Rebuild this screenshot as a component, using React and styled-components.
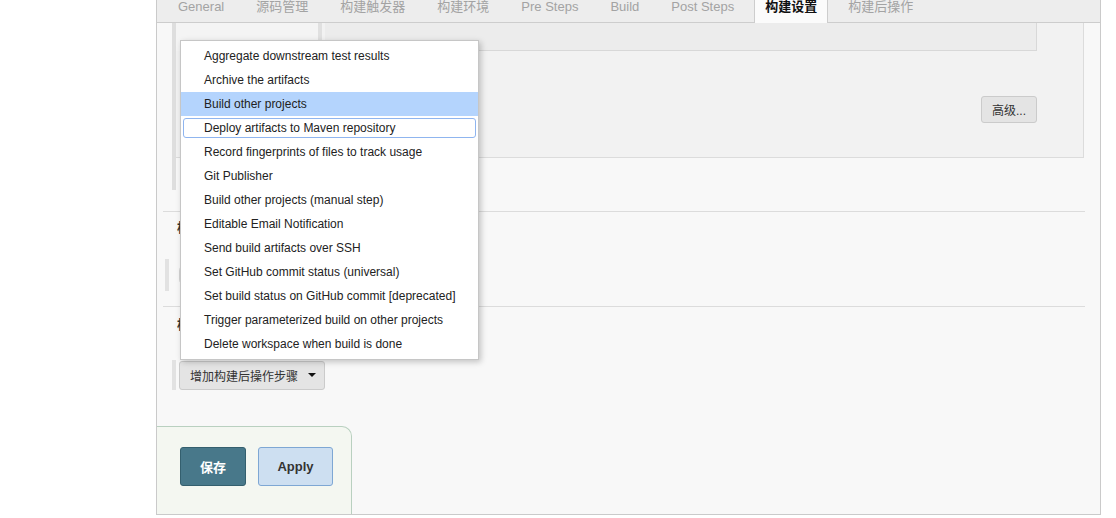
import React from "react";
import styled, { createGlobalStyle } from "styled-components";

const Global = createGlobalStyle`
  html, body { margin: 0; padding: 0; background: #fff; }
  body {
    font-family: "Liberation Sans", Arial, "Noto Sans CJK SC", sans-serif;
    font-size: 13px;
    color: #333;
    overflow: hidden;
  }
`;

const Page = styled.div`
  margin-top: -10px;
  padding-left: 156px;
  width: 1116px;
  box-sizing: border-box;
`;

const Panel = styled.div`
  position: relative;
  width: 945px;
  box-sizing: border-box;
  background: #f8f8f8;
  border: 1px solid #cacaca;
  border-top: none;
`;

const TabBar = styled.div`
  display: flex;
  align-items: stretch;
  gap: 8px;
  height: 33px;
  box-sizing: border-box;
  padding-left: 9px;
  background: #ededed;
  border-bottom: 1px solid #cdcdcd;
`;

const Tab = styled.div`
  padding: 0 ${(p) => (p.$active ? 10 : 11)}px;
  line-height: 31px;
  font-size: 13px;
  white-space: nowrap;
  color: ${(p) => (p.$active ? "#111" : "#a3a3a3")};
  font-weight: ${(p) => (p.$active ? "bold" : "normal")};
  background: ${(p) => (p.$active ? "#fbfbfb" : "transparent")};
  border: 1px solid ${(p) => (p.$active ? "#cdcdcd" : "transparent")};
  border-bottom: none;
  margin-bottom: ${(p) => (p.$active ? "-1px" : "0")};
`;

const Body = styled.div`
  display: flex;
  flex-direction: column;
`;

const Chunk = styled.div`
  margin-left: 15px;
  margin-right: 16px;
  border-left: 4px solid #dedede;
  padding-bottom: 32px;
`;

const ConfigBox = styled.div`
  display: flex;
  flex-direction: column;
  height: 135px;
  box-sizing: border-box;
  background: #f2f2f2;
  border-right: 1px solid #dcdcdc;
  border-bottom: 1px solid #dcdcdc;
  padding-right: 46px;
`;

const FieldRow = styled.div`
  display: flex;
  height: 28px;
`;

const FieldLabel = styled.div`
  width: 142px;
  background: #f4f4f4;
  border-right: 4px solid #e0e0e0;
  margin-right: 3px;
`;

const FieldBox = styled.div`
  flex: 1;
  background: #ececec;
  border-right: 1px solid #d8d8d8;
  border-bottom: 1px solid #d8d8d8;
`;

const AdvancedRow = styled.div`
  display: flex;
  justify-content: flex-end;
  margin-top: 45px;
`;

const GrayButton = styled.button`
  display: inline-flex;
  align-items: center;
  gap: 10px;
  height: ${(p) => p.$h || 27}px;
  padding: 0 ${(p) => p.$pr || 9}px 0 ${(p) => p.$pl || 9}px;
  box-sizing: border-box;
  background: #e4e4e4;
  border: 1px solid #cbcbcb;
  border-radius: 3px;
  font-family: inherit;
  font-size: 12px;
  color: #333;
  cursor: pointer;
`;

const Caret = styled.span`
  width: 0;
  height: 0;
  border-left: 4px solid transparent;
  border-right: 4px solid transparent;
  border-top: 4px solid #111;
`;

const Separator = styled.div`
  margin: ${(p) => p.$top}px 15px 0 6px;
  border-top: 1px solid #dcdcdc;
`;

const Section = styled.div`
  display: flex;
  flex-direction: column;
  margin-left: 6px;
  padding-top: ${(p) => p.$top}px;
`;

const SectionHeading = styled.div`
  padding-left: 14px;
  height: 20px;
  line-height: 20px;
  font-weight: bold;
  font-size: 13px;
  color: #333;
`;

const SectionContent = styled.div`
  display: flex;
  align-items: center;
  margin-top: ${(p) => p.$top}px;
  margin-left: ${(p) => p.$indent}px;
  height: ${(p) => p.$h}px;
  border-left: 4px solid #e2e2e2;
  padding-left: ${(p) => p.$pad}px;
`;

const Pill = styled.div`
  width: 120px;
  height: 22px;
  border: 1px solid #d4d4d4;
  border-radius: 8px;
  background: #f2f2f2;
`;

const SaveBar = styled.div`
  display: flex;
  gap: 12px;
  width: 195px;
  height: 88px;
  box-sizing: border-box;
  margin-top: 36px;
  padding: 20px 0 0 23px;
  background: #f4f7f1;
  border-top: 1px solid #b9d0c0;
  border-right: 1px solid #b9d0c0;
  border-top-right-radius: 10px;
`;

const ActionButton = styled.button`
  width: ${(p) => p.$w}px;
  height: 39px;
  border-radius: 3px;
  font-family: inherit;
  font-size: 13px;
  font-weight: bold;
  cursor: pointer;
  background: ${(p) => (p.$primary ? "#48788a" : "#cddff1")};
  color: ${(p) => (p.$primary ? "#fff" : "#333")};
  border: 1px solid ${(p) => (p.$primary ? "#345f6e" : "#7ea7d4")};
`;

const Menu = styled.ul`
  position: absolute;
  left: 23px;
  top: 50px;
  width: 299px;
  box-sizing: border-box;
  margin: 0;
  padding: 3px 0;
  list-style: none;
  background: #fff;
  border: 1px solid #c6c6c6;
  box-shadow: 2px 2px 6px rgba(0, 0, 0, 0.22);
`;

const MenuItem = styled.li`
  position: relative;
  height: 24px;
  line-height: 24px;
  padding-left: 23px;
  font-size: 12px;
  color: #222;
  white-space: nowrap;
  background: ${(p) => (p.$hover ? "#b4d4fd" : "transparent")};

  ${(p) =>
    p.$focus &&
    `
    &::after {
      content: "";
      position: absolute;
      left: 2px;
      right: 2px;
      top: 2px;
      bottom: 2px;
      border: 1px solid #8fb5ef;
      border-radius: 3px;
    }
  `}
`;

const tabs = [
  "General",
  "源码管理",
  "构建触发器",
  "构建环境",
  "Pre Steps",
  "Build",
  "Post Steps",
  "构建设置",
  "构建后操作",
];

const items = [
  "Aggregate downstream test results",
  "Archive the artifacts",
  "Build other projects",
  "Deploy artifacts to Maven repository",
  "Record fingerprints of files to track usage",
  "Git Publisher",
  "Build other projects (manual step)",
  "Editable Email Notification",
  "Send build artifacts over SSH",
  "Set GitHub commit status (universal)",
  "Set build status on GitHub commit [deprecated]",
  "Trigger parameterized build on other projects",
  "Delete workspace when build is done",
];

export default function App() {
  return (
    <>
      <Global />
      <Page>
        <Panel>
          <TabBar>
            {tabs.map((t) => (
              <Tab key={t} $active={t === "构建设置"}>
                {t}
              </Tab>
            ))}
          </TabBar>
          <Body>
            <Chunk>
              <ConfigBox>
                <FieldRow>
                  <FieldLabel />
                  <FieldBox />
                </FieldRow>
                <AdvancedRow>
                  <GrayButton $pl={10} $pr={10}>高级...</GrayButton>
                </AdvancedRow>
              </ConfigBox>
            </Chunk>
            <Separator $top={21} />
            <Section $top={6}>
              <SectionHeading>构建设置</SectionHeading>
              <SectionContent $top={21} $h={32} $indent={2} $pad={10}>
                <Pill />
              </SectionContent>
            </Section>
            <Separator $top={15} />
            <Section $top={8}>
              <SectionHeading>构建后操作</SectionHeading>
              <SectionContent $top={25} $h={30} $indent={9} $pad={3}>
                <GrayButton $h={29} $pl={10} $pr={8}>
                  增加构建后操作步骤
                  <Caret />
                </GrayButton>
              </SectionContent>
            </Section>
            <SaveBar>
              <ActionButton $primary $w={66}>保存</ActionButton>
              <ActionButton $w={75}>Apply</ActionButton>
            </SaveBar>
          </Body>
          <Menu>
            {items.map((it, i) => (
              <MenuItem key={it} $hover={i === 2} $focus={i === 3}>
                {it}
              </MenuItem>
            ))}
          </Menu>
        </Panel>
      </Page>
    </>
  );
}
